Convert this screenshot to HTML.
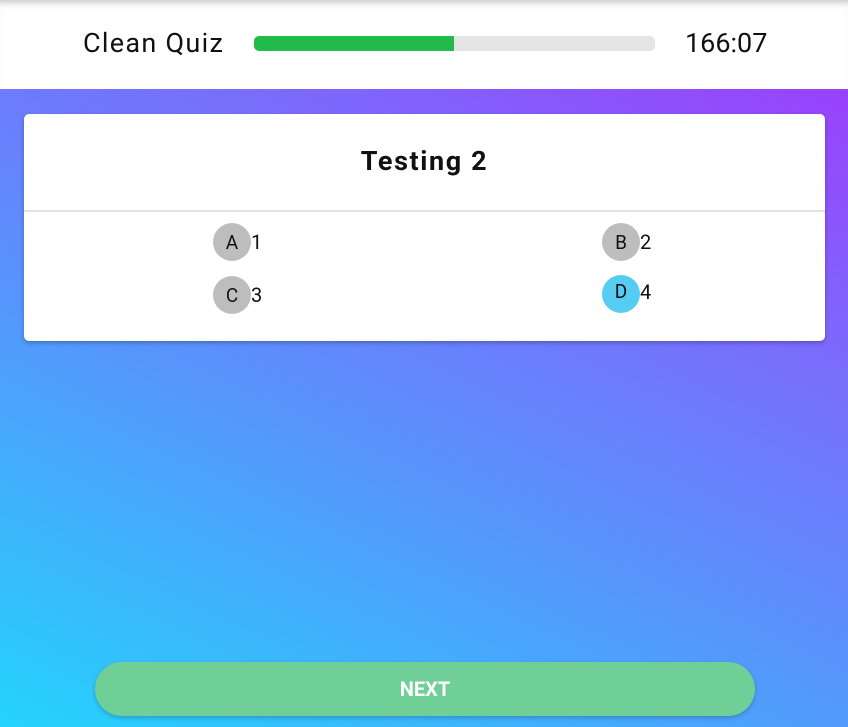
<!DOCTYPE html>
<html><head><meta charset="utf-8"><style>
*{margin:0;padding:0;box-sizing:border-box}
body{width:848px;height:727px;overflow:hidden;font-family:"Roboto","Liberation Sans",sans-serif;position:relative;background:linear-gradient(205deg,#a433fc 0%,#7a6cfc 33%,#5597fc 62%,#24d3fc 100%)}
.header{position:absolute;left:0;top:0;width:848px;height:89px;background:#fff;box-shadow:inset 0 8px 8px -6px rgba(0,0,0,.25)}
.title{position:absolute;left:83px;top:27px;font-size:27px;color:#111;letter-spacing:1.3px}
.bar{position:absolute;left:254px;top:36px;width:401px;height:15px;background:#e4e4e4;border-radius:5px;overflow:hidden}
.bar div{width:200px;height:100%;background:#22bb4a}
.time{position:absolute;left:685px;top:27px;font-size:27px;color:#111}
.card{position:absolute;left:24px;top:114px;width:801px;height:227px;background:#fff;border-radius:5px;box-shadow:0 2px 4px rgba(0,0,0,.25)}
.q{position:absolute;left:0;width:100%;top:31px;text-align:center;font-size:27px;font-weight:bold;color:#111;letter-spacing:1.6px}
.div{position:absolute;left:0;top:96px;width:100%;height:2px;background:#e2e2e2}
.opt{position:absolute;display:flex;align-items:center;font-size:20px;color:#111}
.c{width:38px;height:38px;border-radius:50%;background:#bdbdbd;display:flex;align-items:center;justify-content:center;font-size:19px}
.next{position:absolute;left:95px;top:662px;width:660px;height:54px;border-radius:27px;background:#6fcf97;color:#fff;font-weight:bold;font-size:20px;text-align:center;line-height:54px;box-shadow:0 2px 5px rgba(0,0,0,.2)}
</style></head><body>
<div class="header"><div class="title">Clean Quiz</div><div class="bar"><div></div></div><div class="time">166:07</div></div>
<div class="card">
<div class="q">Testing 2</div><div class="div"></div>
<div class="opt" style="left:189px;top:109px"><div class="c">A</div>1</div>
<div class="opt" style="left:578px;top:109px"><div class="c">B</div>2</div>
<div class="opt" style="left:189px;top:162px"><div class="c">C</div>3</div>
<div class="opt" style="left:578px;top:161px"><div class="c" style="background:#56ccf2;align-items:flex-start;padding-top:5px">D</div><span style="margin-top:-4px">4</span></div>
</div>
<div class="next">NEXT</div>
</body></html>
